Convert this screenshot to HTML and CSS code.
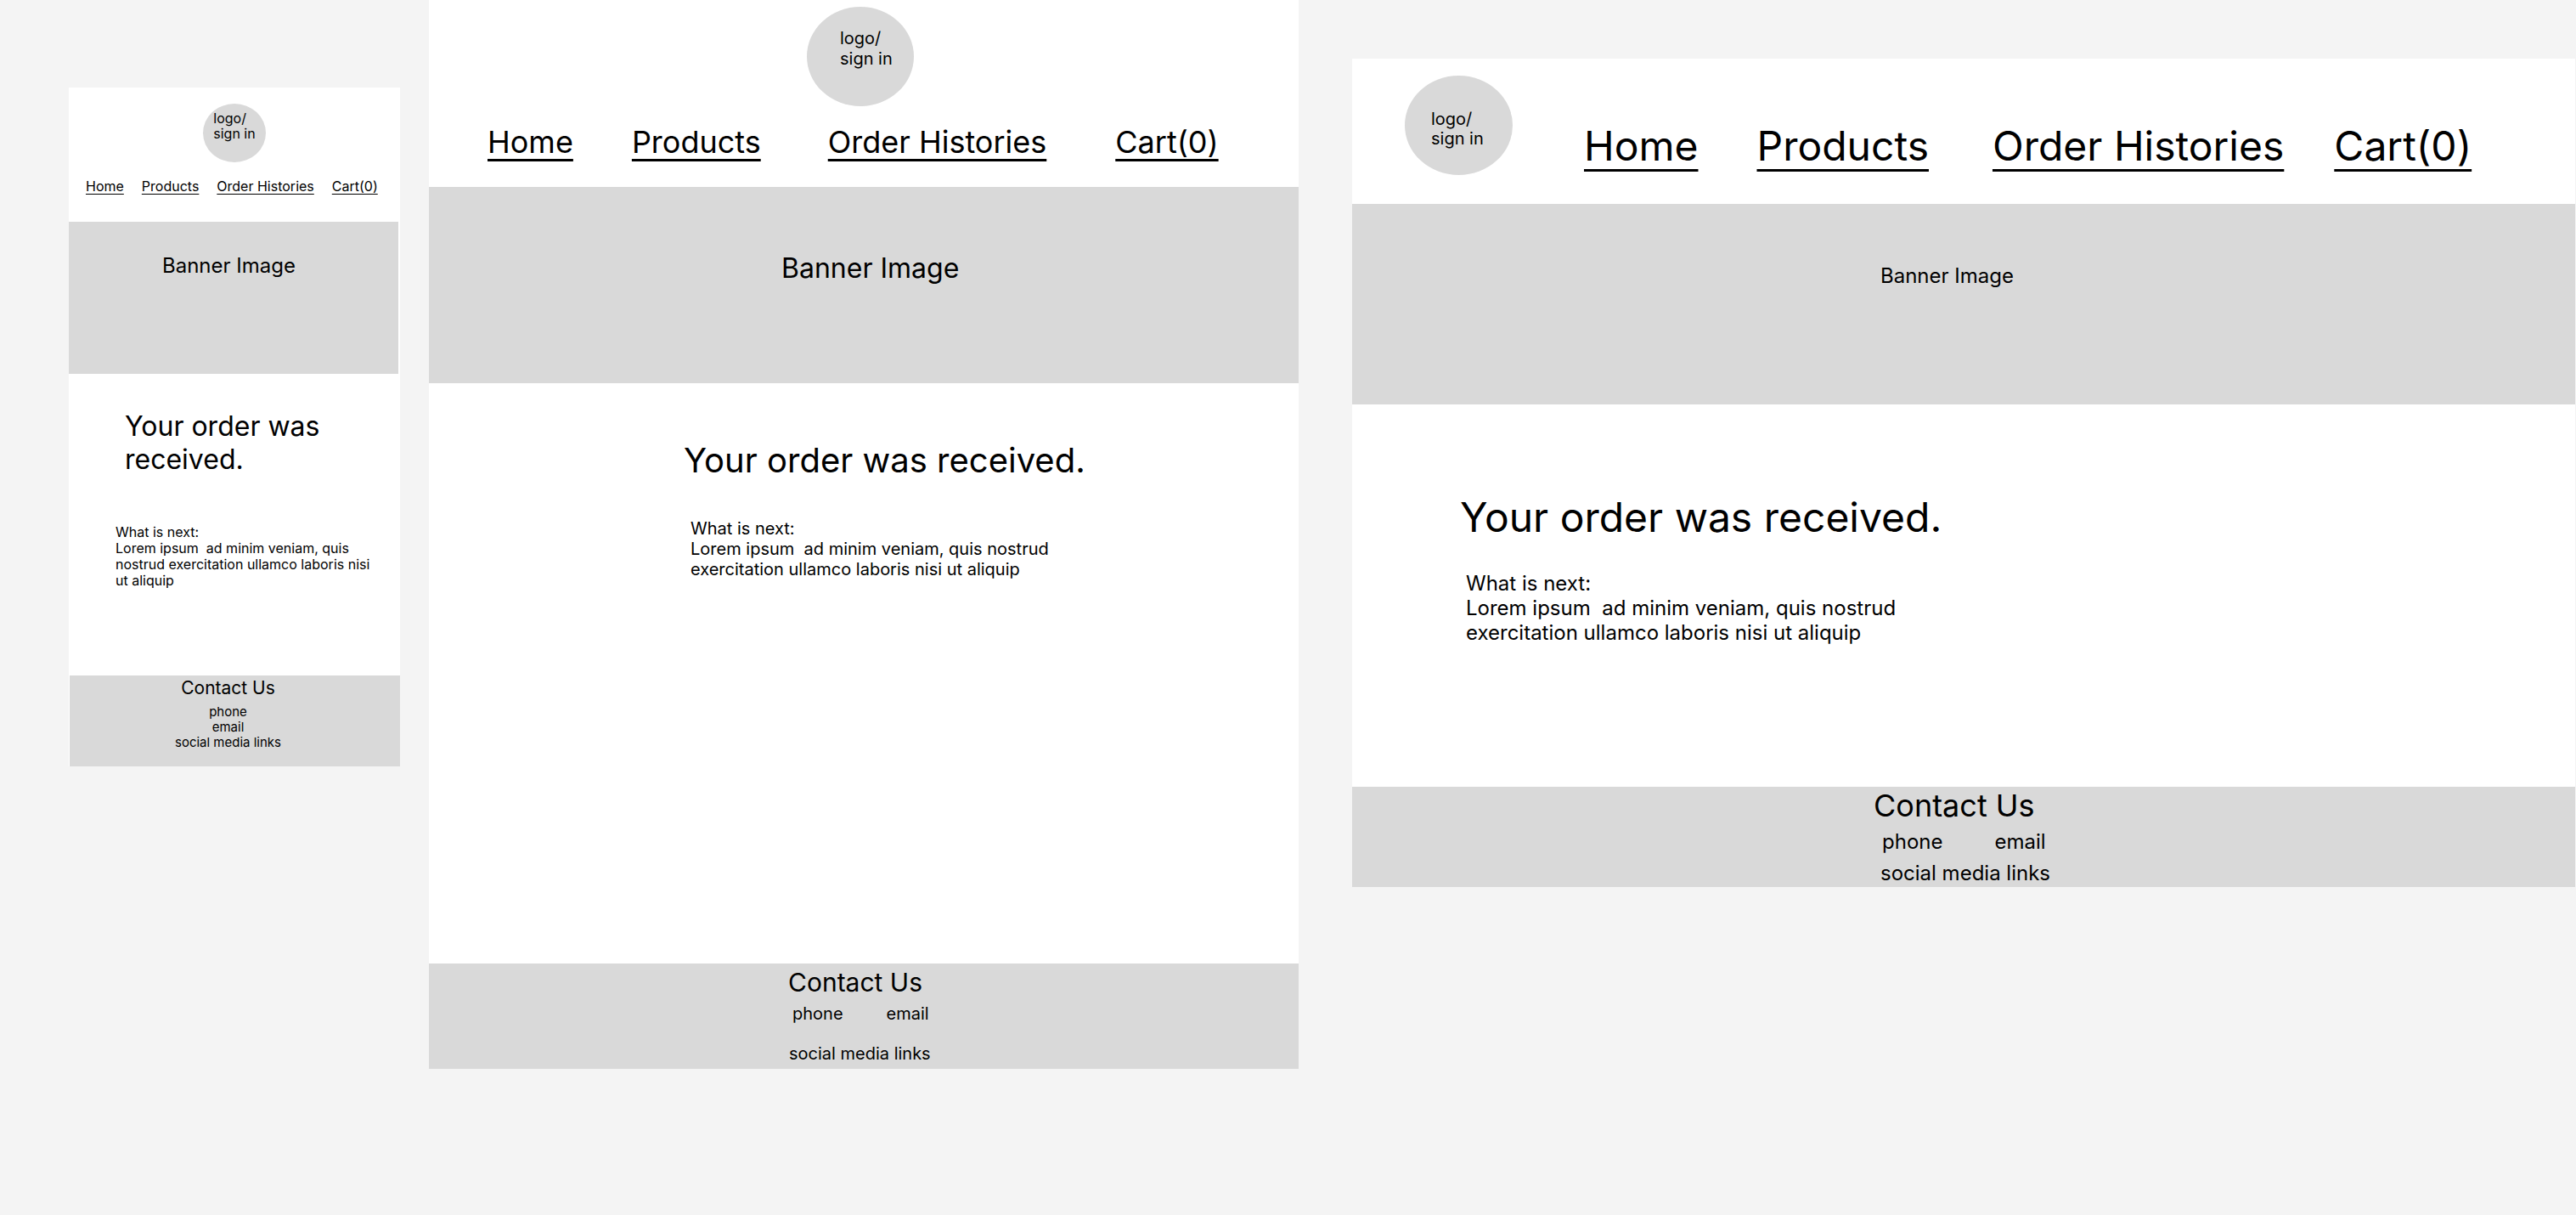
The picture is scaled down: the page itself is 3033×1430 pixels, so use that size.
FILE: index.html
```html
<!DOCTYPE html>
<html lang="en">
<head>
<meta charset="utf-8">
<title>Order received – responsive wireframes</title>
<link rel="stylesheet" href="styles.css">
</head>
<body>
<div class="canvas">

  <section class="frame frame-m">
    <header class="hdr">
      <div class="logo"><span class="logo-text">logo/<br>sign in</span></div>
      <nav class="nav">
        <a class="nav-link n1" href="#">Home</a>
        <a class="nav-link n2" href="#">Products</a>
        <a class="nav-link n3" href="#">Order Histories</a>
        <a class="nav-link n4" href="#">Cart(0)</a>
      </nav>
    </header>
    <div class="banner"><span class="banner-text">Banner Image</span></div>
    <main class="content">
      <h1 class="title">Your order was received.</h1>
      <p class="next">What is next:<br>Lorem ipsum&nbsp; ad minim veniam, quis nostrud exercitation ullamco laboris nisi ut aliquip</p>
    </main>
    <footer class="foot">
      <h2 class="foot-title">Contact Us</h2>
      <div class="foot-row"><span>phone</span><span>email</span></div>
      <div class="foot-social">social media links</div>
    </footer>
  </section>

  <section class="frame frame-t">
    <header class="hdr">
      <div class="logo"><span class="logo-text">logo/<br>sign in</span></div>
      <nav class="nav">
        <a class="nav-link n1" href="#">Home</a>
        <a class="nav-link n2" href="#">Products</a>
        <a class="nav-link n3" href="#">Order Histories</a>
        <a class="nav-link n4" href="#">Cart(0)</a>
      </nav>
    </header>
    <div class="banner"><span class="banner-text">Banner Image</span></div>
    <main class="content">
      <h1 class="title">Your order was received.</h1>
      <p class="next">What is next:<br>Lorem ipsum&nbsp; ad minim veniam, quis nostrud exercitation ullamco laboris nisi ut aliquip</p>
    </main>
    <footer class="foot">
      <h2 class="foot-title">Contact Us</h2>
      <div class="foot-row"><span>phone</span><span>email</span></div>
      <div class="foot-social">social media links</div>
    </footer>
  </section>

  <section class="frame frame-d">
    <header class="hdr">
      <div class="logo"><span class="logo-text">logo/<br>sign in</span></div>
      <nav class="nav">
        <a class="nav-link n1" href="#">Home</a>
        <a class="nav-link n2" href="#">Products</a>
        <a class="nav-link n3" href="#">Order Histories</a>
        <a class="nav-link n4" href="#">Cart(0)</a>
      </nav>
    </header>
    <div class="banner"><span class="banner-text">Banner Image</span></div>
    <main class="content">
      <h1 class="title">Your order was received.</h1>
      <p class="next">What is next:<br>Lorem ipsum&nbsp; ad minim veniam, quis nostrud exercitation ullamco laboris nisi ut aliquip</p>
    </main>
    <footer class="foot">
      <h2 class="foot-title">Contact Us</h2>
      <div class="foot-row"><span>phone</span><span>email</span></div>
      <div class="foot-social">social media links</div>
    </footer>
  </section>

</div>
</body>
</html>
```

FILE: styles.css
```css
* { box-sizing: border-box; margin: 0; padding: 0; }

html, body {
  width: 3033px;
  height: 1430px;
  overflow: hidden;
}

body {
  background: #f4f4f4;
  font-family: Inter, "Noto Sans", "Liberation Sans", sans-serif;
  color: #000;
}

.canvas {
  position: relative;
  width: 3033px;
  height: 1430px;
}

/* frames are artboards placed on a free canvas */
.frame {
  position: absolute;
  background: #fff;
  display: flex;
  flex-direction: column;
  overflow: hidden;
}

.frame-m { left: 81px; top: 103px; width: 390px; height: 799px; }
.frame-t { left: 505px; top: 0; width: 1024px; height: 1258px; }
.frame-d { left: 1592px; top: 69px; width: 1440px; height: 975px; }

.hdr { flex: none; display: flex; }

.logo {
  flex: none;
  background: #d9d9d9;
  border-radius: 50%;
}
.logo-text { display: block; white-space: nowrap; }

.nav { display: flex; flex: none; }
.nav-link {
  color: #000;
  text-decoration: underline;
  white-space: nowrap;
}

.banner { flex: none; background: #d9d9d9; }
.banner-text { display: block; white-space: nowrap; }

.content { flex: 1; }
.title { font-weight: 400; }

.foot { flex: none; background: #d9d9d9; display: flex; flex-direction: column; }
.foot-title { font-weight: 400; white-space: nowrap; }
.foot-row { display: flex; white-space: nowrap; }
.foot-social { white-space: nowrap; }

/* ---------- mobile (390) ---------- */
.frame-m .hdr { height: 158px; flex-direction: column; }
.frame-m .logo {
  width: 74px; height: 69px;
  margin-top: 19px;
  align-self: center;
  display: flex; justify-content: center;
  padding-top: 8px;
  font-size: 16px; line-height: 18px;
}
.frame-m .nav {
  margin-top: 19px;
  padding-left: 20px;
  gap: 21px;
  font-size: 16px; line-height: 19px;
}
.frame-m .nav-link { text-underline-offset: 3px; text-decoration-thickness: 1px; }
.frame-m .banner {
  width: 388px; height: 179px;
  padding: 37px 0 0 110px;
  font-size: 24px; line-height: 29px;
}
.frame-m .title {
  margin: 42px 0 0 66px;
  width: 260px;
  font-size: 32px; line-height: 39px;
}
.frame-m .next {
  margin: 57px 0 0 55px;
  width: 305px;
  font-size: 16px; line-height: 19px;
}
.frame-m .foot {
  height: 107px;
  margin-left: 1px;
  align-items: center;
  padding: 2px 16px 0 0;
}
.frame-m .foot-title { font-size: 21px; line-height: 25px; }
.frame-m .foot-row {
  flex-direction: column;
  align-items: center;
  margin-top: 7px;
  font-size: 15px; line-height: 18px;
}
.frame-m .foot-social { font-size: 15px; line-height: 18px; }

/* ---------- tablet (1024) ---------- */
.frame-t .hdr { height: 220px; flex-direction: column; }
.frame-t .logo {
  width: 126px; height: 117px;
  margin: 8px 0 0 445px;
  padding: 25px 0 0 39px;
  font-size: 20px; line-height: 24px;
}
.frame-t .nav {
  margin-top: 20px;
  padding-left: 69px;
  font-size: 36px; line-height: 44px;
}
.frame-t .n2 { margin-left: 69px; }
.frame-t .n3 { margin-left: 79px; }
.frame-t .n4 { margin-left: 81px; }
.frame-t .nav-link { text-underline-offset: 7px; text-decoration-thickness: 3px; }
.frame-t .banner {
  height: 231px;
  padding: 76px 0 0 415px;
  font-size: 32px; line-height: 39px;
}
.frame-t .title {
  margin: 67px 0 0 300px;
  white-space: nowrap;
  font-size: 40px; line-height: 48px;
}
.frame-t .next {
  margin: 44px 0 0 308px;
  width: 440px;
  font-size: 20px; line-height: 24px;
}
.frame-t .foot { height: 124px; padding-top: 4px; }
.frame-t .foot-title { margin-left: 423px; font-size: 30px; line-height: 36px; }
.frame-t .foot-row {
  margin: 7px 0 0 428px;
  gap: 51px;
  font-size: 20px; line-height: 24px;
}
.frame-t .foot-social {
  margin: 23px 0 0 424px;
  font-size: 20px; line-height: 24px;
}

/* ---------- desktop (1440) ---------- */
.frame-d .hdr { height: 171px; align-items: flex-start; }
.frame-d .logo {
  width: 127px; height: 117px;
  margin: 20px 0 0 62px;
  padding: 40px 0 0 31px;
  font-size: 20px; line-height: 23px;
}
.frame-d .nav {
  margin: 74px 0 0 84px;
  font-size: 48px; line-height: 58px;
}
.frame-d .n2 { margin-left: 69px; }
.frame-d .n3 { margin-left: 75px; }
.frame-d .n4 { margin-left: 59px; }
.frame-d .nav-link { text-underline-offset: 10px; text-decoration-thickness: 3px; }
.frame-d .banner {
  height: 236px;
  padding: 70px 0 0 622px;
  font-size: 24px; line-height: 29px;
}
.frame-d .title {
  margin: 104px 0 0 127px;
  white-space: nowrap;
  font-size: 48px; line-height: 58px;
}
.frame-d .next {
  margin: 34px 0 0 134px;
  width: 540px;
  font-size: 24px; line-height: 29px;
}
.frame-d .foot { height: 118px; }
.frame-d .foot-title { margin-left: 614px; font-size: 36px; line-height: 44px; }
.frame-d .foot-row {
  margin: 6px 0 0 624px;
  gap: 61px;
  font-size: 24px; line-height: 29px;
}
.frame-d .foot-social {
  margin: 8px 0 0 622px;
  font-size: 24px; line-height: 29px;
}
```
